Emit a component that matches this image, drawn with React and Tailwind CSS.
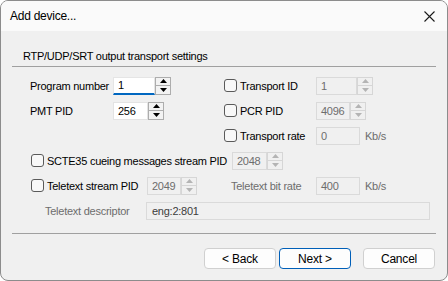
import React from 'react'

function Arrows({ disabled }) {
  const c = disabled ? '#b4b4b4' : '#000000'
  return (
    <div
      className={
        'flex w-[16px] shrink-0 flex-col border ' +
        (disabled ? 'border-[#d6d6d6] bg-[#f0f0f0]' : 'border-[#adadad] bg-[#f3f3f3]')
      }
    >
      <div className="flex flex-1 items-center justify-center">
        <svg width="7" height="4" viewBox="0 0 7 4">
          <path d="M0 4 L3.5 0 L7 4 Z" fill={c} />
        </svg>
      </div>
      <div className={'h-px ' + (disabled ? 'bg-[#d6d6d6]' : 'bg-[#adadad]')} />
      <div className="flex flex-1 items-center justify-center">
        <svg width="7" height="4" viewBox="0 0 7 4">
          <path d="M0 0 L7 0 L3.5 4 Z" fill={c} />
        </svg>
      </div>
    </div>
  )
}

function Field({ value, width, disabled, focused, spin }) {
  return (
    <div className="flex h-[18px] shrink-0">
      <div
        className={
          width +
          ' flex items-center pl-[4px] ' +
          (disabled
            ? 'border border-[#dadada] bg-[#f0f0f0] text-[#6d6d6d]'
            : focused
              ? 'border border-[#e5e5e5] border-b-2 border-b-[#0067c0] bg-white text-black'
              : 'border border-[#e3e3e3] bg-white text-black')
        }
      >
        {value}
      </div>
      {spin && <Arrows disabled={disabled} />}
    </div>
  )
}

function Check({ label, disabled }) {
  return (
    <div className="flex items-center">
      <div className="h-[13px] w-[13px] shrink-0 rounded-[3px] border border-[#5a5a5a] bg-[#f8f8f8]" />
      <span className={'ml-[3px] ' + (disabled ? 'text-[#6d6d6d]' : 'text-black')}>{label}</span>
    </div>
  )
}

function Btn({ children, primary }) {
  return (
    <button
      className={
        'flex h-[21px] w-[72px] items-center justify-center rounded-[4px] bg-[#fdfdfd] text-[12px] tracking-[-0.2px] text-black ' +
        (primary ? 'border border-[#005fb8]' : 'border border-[#d0d0d0]')
      }
    >
      {children}
    </button>
  )
}

export default function App() {
  return (
    <div
      className="h-[281px] w-[448px] whitespace-nowrap bg-white text-[11px] leading-[16px] tracking-[-0.25px]"
      style={{ fontFamily: '"Liberation Sans", Arial, sans-serif' }}
    >
      <div className="flex h-full flex-col overflow-hidden rounded-[8px] border border-[#8c8c8c] bg-[#f0f0f0]">
        {/* title bar */}
        <div className="flex h-[30px] items-center justify-between bg-[#fafafa] pl-[9px] pr-[12px]">
          <span className="text-[12px] text-black">Add device...</span>
          <svg width="11" height="11" viewBox="0 0 11 11">
            <path d="M0.5 0.5 L10.5 10.5 M10.5 0.5 L0.5 10.5" stroke="#1a1a1a" strokeWidth="1.1" />
          </svg>
        </div>

        <div className="flex flex-col px-[11px]">
          <div className="pl-[11px] pt-[17px] text-black">RTP/UDP/SRT output transport settings</div>
          <div className="mt-[2px] h-px bg-[#a0a0a0]" />

          <div className="mt-[6px] flex flex-col">
            {/* row 1 */}
            <div className="flex h-[25px] items-center">
              <div className="flex w-[212px] shrink-0 items-center pl-[18px]">
                <span className="w-[83px] shrink-0">Program number</span>
                <Field value="1" width="w-[42px]" focused spin />
              </div>
              <div className="flex items-center">
                <div className="w-[92px] shrink-0">
                  <Check label="Transport ID" />
                </div>
                <Field value="1" width="w-[41px]" disabled spin />
              </div>
            </div>

            {/* row 2 */}
            <div className="flex h-[25px] items-center">
              <div className="flex w-[212px] shrink-0 items-center pl-[18px]">
                <span className="w-[83px] shrink-0">PMT PID</span>
                <Field value="256" width="w-[35px]" spin />
              </div>
              <div className="flex items-center">
                <div className="w-[92px] shrink-0">
                  <Check label="PCR PID" />
                </div>
                <Field value="4096" width="w-[34px]" disabled spin />
              </div>
            </div>

            {/* row 3 */}
            <div className="flex h-[25px] items-center">
              <div className="w-[212px] shrink-0" />
              <div className="flex items-center">
                <div className="w-[92px] shrink-0">
                  <Check label="Transport rate" />
                </div>
                <Field value="0" width="w-[44px]" disabled />
                <span className="ml-[5px] text-[#6d6d6d]">Kb/s</span>
              </div>
            </div>

            {/* row 4 */}
            <div className="flex h-[25px] items-center pl-[19px]">
              <div className="w-[201px] shrink-0">
                <Check label="SCTE35 cueing messages stream PID" />
              </div>
              <Field value="2048" width="w-[35px]" disabled spin />
            </div>

            {/* row 5 */}
            <div className="flex h-[25px] items-center pl-[19px]">
              <div className="w-[116px] shrink-0">
                <Check label="Teletext stream PID" />
              </div>
              <Field value="2049" width="w-[34px]" disabled spin />
              <span className="ml-[34px] w-[85px] shrink-0 text-[#6d6d6d]">Teletext bit rate</span>
              <Field value="400" width="w-[44px]" disabled />
              <span className="ml-[5px] text-[#6d6d6d]">Kb/s</span>
            </div>

            {/* row 6 */}
            <div className="flex h-[25px] items-center pl-[33px]">
              <span className="w-[101px] shrink-0 text-[#6d6d6d]">Teletext descriptor</span>
              <div className="flex h-[18px] w-[284px] items-center border border-[#dadada] bg-[#f0f0f0] pl-[5px] text-[#3c3c3c]">
                eng:2:801
              </div>
            </div>
          </div>

          <div className="mt-[10px] h-px bg-[#a0a0a0]" />

          <div className="mt-[14px] flex justify-end pr-px">
            <Btn>&lt; Back</Btn>
            <div className="ml-[3px]">
              <Btn primary>Next &gt;</Btn>
            </div>
            <div className="ml-[12px]">
              <Btn>Cancel</Btn>
            </div>
          </div>
        </div>
      </div>
    </div>
  )
}
